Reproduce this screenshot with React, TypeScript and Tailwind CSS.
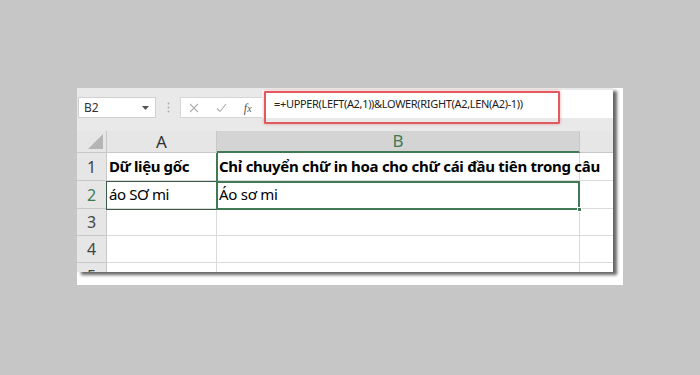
import React from "react";

const G = "#3f7a54";

function Row({ n, a, b, h, bold, sel }: { n: string; a?: string; b?: string; h: number; bold?: boolean; sel?: boolean }) {
  return (
    <div className="flex" style={{ height: h }}>
      <div className={`w-[30px] shrink-0 bg-[#e6e6e6] border-b border-r border-[#c8c8c8] flex items-center justify-center text-[16px] ${sel ? "text-[#3f7a54]" : "text-[#444]"}`}>{n}</div>
      <div className={`w-[110px] shrink-0 border-b border-r border-[#dadada] flex items-center pl-[2px] text-[15px] tracking-[-0.4px] text-black ${bold ? "font-bold" : ""}`}>{a}</div>
      <div className={`w-[363px] shrink-0 border-b border-r border-[#dadada] flex items-center pl-[2px] text-[15px] tracking-[-0.28px] text-black whitespace-nowrap overflow-visible ${bold ? "font-bold" : ""}`}>{b}</div>
      <div className="flex-1 border-b border-[#dadada]" />
    </div>
  );
}

export default function App() {
  return (
    <div className="w-[700px] h-[375px] bg-[#c6c6c6] pt-[88px] pl-[77px] overflow-hidden" style={{ fontFamily: "'Noto Sans', 'Open Sans', sans-serif" }}>
      <div className="w-[546px] h-[197px] bg-white">
        <div className="relative w-[536px] h-[184px] bg-white shadow-[4px_3px_3px_rgba(0,0,0,0.6)] overflow-hidden">
          {/* toolbar */}
          <div className="h-[43px] bg-[#e9e9e9] flex items-start pt-[9px] pl-[1px]">
            <div className="w-[78px] h-[21px] bg-white border border-[#d0d0d0] flex items-center justify-between pl-[5px] pr-[6px] text-[12px] text-[#333]">
              <span>B2</span>
              <svg width="7" height="4" viewBox="0 0 7 4"><path d="M0 0h7L3.5 4z" fill="#555" /></svg>
            </div>
            <div className="w-[24px] h-[21px] flex items-center justify-center">
              <svg width="3" height="11" viewBox="0 0 3 11"><circle cx="1.5" cy="1.5" r="0.9" fill="#aaa" /><circle cx="1.5" cy="5.5" r="0.9" fill="#aaa" /><circle cx="1.5" cy="9.5" r="0.9" fill="#aaa" /></svg>
            </div>
            <div className="w-[82px] h-[21px] bg-white border border-[#d6d6d6] border-r-0 flex items-center justify-around pr-[2px]">
              <svg width="10" height="10" viewBox="0 0 10 10"><path d="M1 1l8 8M9 1L1 9" stroke="#b0b0b0" strokeWidth="1.1" /></svg>
              <svg width="11" height="10" viewBox="0 0 11 10"><path d="M1 5.5l3 3L10 1" stroke="#b0b0b0" strokeWidth="1.1" fill="none" /></svg>
              <span className="text-[12px] italic text-[#555]" style={{ fontFamily: "'Liberation Serif', serif" }}>f<span className="text-[10px]">x</span></span>
            </div>
            <div className="relative -mt-[7px] h-[28px] flex-1 bg-white flex items-center pl-[12px] text-[11px] text-[#222] tracking-[-0.33px]">
              =+UPPER(LEFT(A2,1))&amp;LOWER(RIGHT(A2,LEN(A2)-1))
              <div className="absolute left-[2px] top-[1px] w-[296px] h-[33px] border-2 border-[#e05a5f] rounded-[1px] shadow-[0_0_3px_rgba(224,90,95,0.6)]" />
            </div>
          </div>
          {/* header */}
          <div className="flex h-[22px]">
            <div className="w-[30px] shrink-0 bg-[#e6e6e6] border-r border-b border-[#c8c8c8] flex items-end justify-end pr-[3px] pb-[3px]">
              <svg width="15" height="15" viewBox="0 0 15 15"><path d="M15 0V15H0z" fill="#b5b5b5" /></svg>
            </div>
            <div className="w-[110px] shrink-0 bg-[#e6e6e6] border-r border-b border-[#c8c8c8] flex items-center justify-center text-[17px] text-[#333]">A</div>
            <div className="w-[363px] shrink-0 bg-[#d4d4d4] border-r border-[#c8c8c8] border-b-2 border-b-[#3f7a54] flex items-center justify-center text-[17px] text-[#3f7a54]">B</div>
            <div className="flex-1 bg-[#e6e6e6] border-b border-[#c8c8c8]" />
          </div>
          <Row n="1" a="Dữ liệu gốc" b="Chỉ chuyển chữ in hoa cho chữ cái đầu tiên trong câu" h={28} bold />
          <Row n="2" a="áo SƠ mi" b="Áo sơ mi" h={28} sel />
          <Row n="3" h={27} />
          <Row n="4" h={27} />
          <Row n="5" h={27} />
          {/* selection overlays */}
          <div className="absolute left-[139px] top-[65px] w-[2px] h-[28px]" style={{ background: G }} />
          <div className="absolute left-[29px] top-[93px] w-[112px] h-[29px] border border-[#3c5a48]" />
          <div className="absolute left-[139px] top-[93px] w-[364px] h-[29px] border-2" style={{ borderColor: G }} />
          <div className="absolute left-[500px] top-[119px] w-[5px] h-[5px] border border-white" style={{ background: G }} />
        </div>
      </div>
    </div>
  );
}
